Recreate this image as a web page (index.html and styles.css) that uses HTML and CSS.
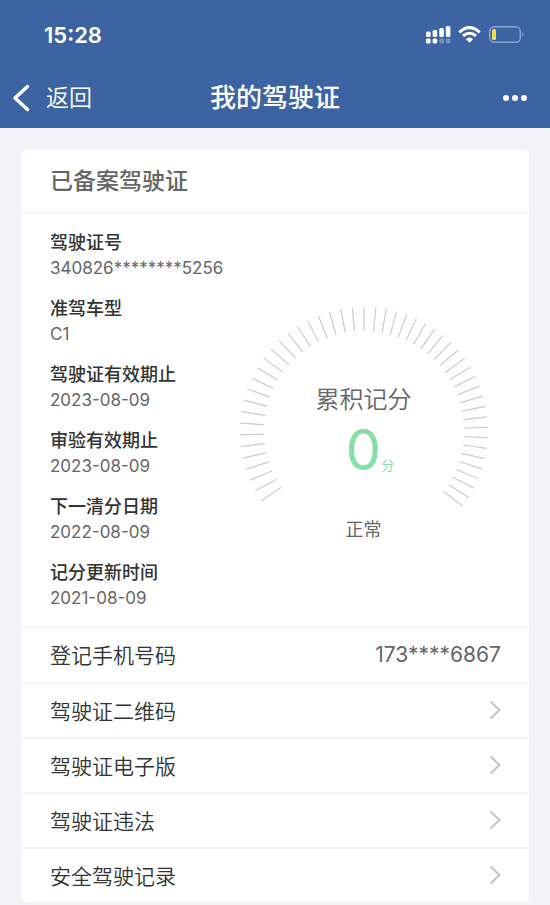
FILE: index.html
```html
<!DOCTYPE html>
<html lang="zh-CN">
<head>
<meta charset="utf-8">
<meta name="viewport" content="width=device-width, initial-scale=1">
<title>我的驾驶证</title>
<link rel="stylesheet" href="styles.css">
</head>
<body>
<header class="header">
  <div class="status">
    <span class="clock">15:28</span>
    <svg class="status-icons" viewBox="0 0 100 20" aria-hidden="true">
      <g fill="#fff">
        <rect x="1" y="6.500" width="4.600" height="5.500" rx="1.500"/>
        <rect x="7.600" y="5" width="4.600" height="7" rx="1.500"/>
        <rect x="14.300" y="3" width="4.600" height="9" rx="1.500"/>
        <rect x="20.800" y="1" width="4.600" height="11" rx="1.500"/>
        <rect x="1" y="13.500" width="4.600" height="5" rx="1.500"/>
        <rect x="7.600" y="13.500" width="4.600" height="5" rx="1.500"/>
        <g opacity=".3">
          <rect x="14.300" y="13.500" width="4.600" height="5" rx="1.500"/>
          <rect x="20.800" y="13.500" width="4.600" height="5" rx="1.500"/>
        </g>
        <path d="M44.500 17.700L40.800 14Q44.500 10.900 48.200 14Z"/>
      </g>
      <g fill="none" stroke="#fff" stroke-width="3">
        <path d="M34.300 7.300Q44.500 -2 54.700 7.300"/>
        <path d="M38 11Q44.500 5.400 51 11"/>
      </g>
      <rect x="64.700" y="1.700" width="30.600" height="15.600" rx="4.500" fill="none" stroke="#8ba6d2" stroke-width="1.400"/>
      <rect x="67" y="4" width="4" height="11" rx="1.500" fill="#f5dc4e"/>
      <path d="M97.300 7Q99.700 9.500 97.300 12Z" fill="#8ba6d2"/>
    </svg>
  </div>
  <nav class="nav">
    <button class="back" type="button">
      <svg class="back-icon" viewBox="0 0 18 28" aria-hidden="true"><path d="M15.500 2.500L3 14L15.500 25.500"/></svg>
      <span>返回</span>
    </button>
    <h1 class="nav-title">我的驾驶证</h1>
    <button class="more" type="button" aria-label="更多">
      <svg class="more-icon" viewBox="0 0 26 8" aria-hidden="true"><circle cx="4" cy="4" r="3"/><circle cx="13" cy="4" r="3"/><circle cx="22" cy="4" r="3"/></svg>
    </button>
  </nav>
</header>
<main class="card">
  <h2 class="card-title">已备案驾驶证</h2>
  <section class="details">
    <dl class="facts">
      <div><dt>驾驶证号</dt><dd>340826********5256</dd></div>
      <div><dt>准驾车型</dt><dd>C1</dd></div>
      <div><dt>驾驶证有效期止</dt><dd>2023-08-09</dd></div>
      <div><dt>审验有效期止</dt><dd>2023-08-09</dd></div>
      <div><dt>下一清分日期</dt><dd>2022-08-09</dd></div>
      <div><dt>记分更新时间</dt><dd>2021-08-09</dd></div>
    </dl>
    <div class="gauge">
      <svg class="dial" viewBox="0 0 250 202" aria-hidden="true"><g id="ticks"></g></svg>
      <div class="reading">
        <span class="gauge-label">累积记分</span>
        <span class="score"><span class="score-value">0</span><span class="score-unit">分</span></span>
        <span class="state">正常</span>
      </div>
    </div>
  </section>
  <div class="row row-phone"><span>登记手机号码</span><span class="phone">173****6867</span></div>
  <a class="row" href="#qr"><span>驾驶证二维码</span><svg class="chevron" viewBox="0 0 12 20" aria-hidden="true"><path d="M1.500 1.500L10.500 10L1.500 18.500"/></svg></a>
  <a class="row" href="#digital"><span>驾驶证电子版</span><svg class="chevron" viewBox="0 0 12 20" aria-hidden="true"><path d="M1.500 1.500L10.500 10L1.500 18.500"/></svg></a>
  <a class="row" href="#violations"><span>驾驶证违法</span><svg class="chevron" viewBox="0 0 12 20" aria-hidden="true"><path d="M1.500 1.500L10.500 10L1.500 18.500"/></svg></a>
  <a class="row" href="#record"><span>安全驾驶记录</span><svg class="chevron" viewBox="0 0 12 20" aria-hidden="true"><path d="M1.500 1.500L10.500 10L1.500 18.500"/></svg></a>
</main>
<script src="gauge.js"></script>
</body>
</html>
```
FILE: styles.css
```css
* { box-sizing: border-box; }

body {
  margin: 0;
  background: #f2f2f8;
  color: #333;
  font-family: Inter, "Noto Sans CJK SC", sans-serif;
}

h1, h2, dl, dd { margin: 0; }

button {
  padding: 0;
  border: 0;
  background: none;
  color: inherit;
  font: inherit;
}

.header {
  background: #3c64a2;
  color: #fff;
}

.status {
  display: flex;
  align-items: center;
  justify-content: space-between;
  height: 70px;
  padding: 0 25px 0 44px;
}

.clock {
  font-size: 22px;
  font-weight: 600;
}

.status-icons {
  width: 100px;
  height: 20px;
}

.nav {
  display: grid;
  grid-template-columns: 1fr auto 1fr;
  align-items: center;
  height: 58px;
  padding: 0 12px 2px;
}

.back {
  display: flex;
  align-items: center;
  gap: 16px;
  font-size: 23px;
  font-weight: 350;
  line-height: 32px;
}

.back-icon {
  width: 18px;
  height: 28px;
  fill: none;
  stroke: #fff;
  stroke-width: 3.500;
  stroke-linecap: round;
  stroke-linejoin: round;
}

.nav-title {
  font-size: 26px;
  font-weight: 500;
  line-height: 36px;
}

.more {
  display: flex;
  justify-self: end;
  padding-right: 10px;
}

.more-icon {
  width: 26px;
  height: 8px;
  fill: #fff;
}

.card {
  margin: 22px 21px 4px;
  border-radius: 6px;
  background: #fff;
}

.card-title {
  padding: 14px 29px;
  color: #666;
  font-size: 23px;
  font-weight: 500;
  line-height: 34px;
}

.details {
  display: grid;
  grid-template-columns: 188px 1fr;
  border-top: 2px solid #f4f4f6;
  padding: 16px 40px 16px 29px;
}

.facts {
  display: grid;
  gap: 16px;
}

dt {
  font-size: 18px;
  font-weight: 500;
  line-height: 26px;
}

dd {
  color: #666;
  font-size: 17px;
  line-height: 24px;
}

.gauge {
  display: grid;
  align-content: start;
  justify-items: center;
  padding-top: 76px;
}

.dial, .reading { grid-area: 1 / 1; }

.dial {
  width: 250px;
  height: 202px;
}

#ticks {
  stroke: #ccc;
  stroke-width: 1.200;
}

.reading {
  display: flex;
  flex-direction: column;
  align-items: center;
  padding-top: 76px;
  color: #666;
}

.gauge-label {
  font-size: 24px;
  font-weight: 350;
  line-height: 36px;
}

.score {
  display: grid;
  grid-template-columns: 1fr auto 1fr;
  align-items: baseline;
  color: #85dea5;
  line-height: 64px;
}

.score-value {
  grid-column: 2;
  font-size: 56px;
}

.score-unit {
  font-size: 13px;
}

.state {
  padding-top: 20px;
  font-size: 18px;
  line-height: 26px;
}

.row {
  display: flex;
  align-items: center;
  justify-content: space-between;
  height: 55px;
  padding: 0 28px 2px 29px;
  border-top: 2px solid #f4f4f6;
  color: #333;
  font-size: 21px;
  font-weight: 350;
  text-decoration: none;
}

.row-phone { height: 56px; }

.phone {
  color: #666;
  font-weight: 400;
}

.chevron {
  width: 12px;
  height: 20px;
  fill: none;
  stroke: #c4c4c4;
  stroke-width: 2;
}
```
FILE: gauge.js
```js
// Draws the dial ticks; angles are in degrees clockwise from the top.
const ticks = document.getElementById("ticks");

function addTick(angle) {
  const line = document.createElementNS("http://www.w3.org/2000/svg", "line");
  line.setAttribute("x1", 125);
  line.setAttribute("x2", 125);
  line.setAttribute("y1", 1);
  line.setAttribute("y2", 25);
  line.setAttribute("transform", `rotate(${angle} 125 125)`);
  ticks.appendChild(line);
}

for (let i = 0; i <= 23; i++) addTick(-5.4 * i);
for (let i = 0; i <= 25; i++) addTick(5.5 + 4.87 * i);
```
